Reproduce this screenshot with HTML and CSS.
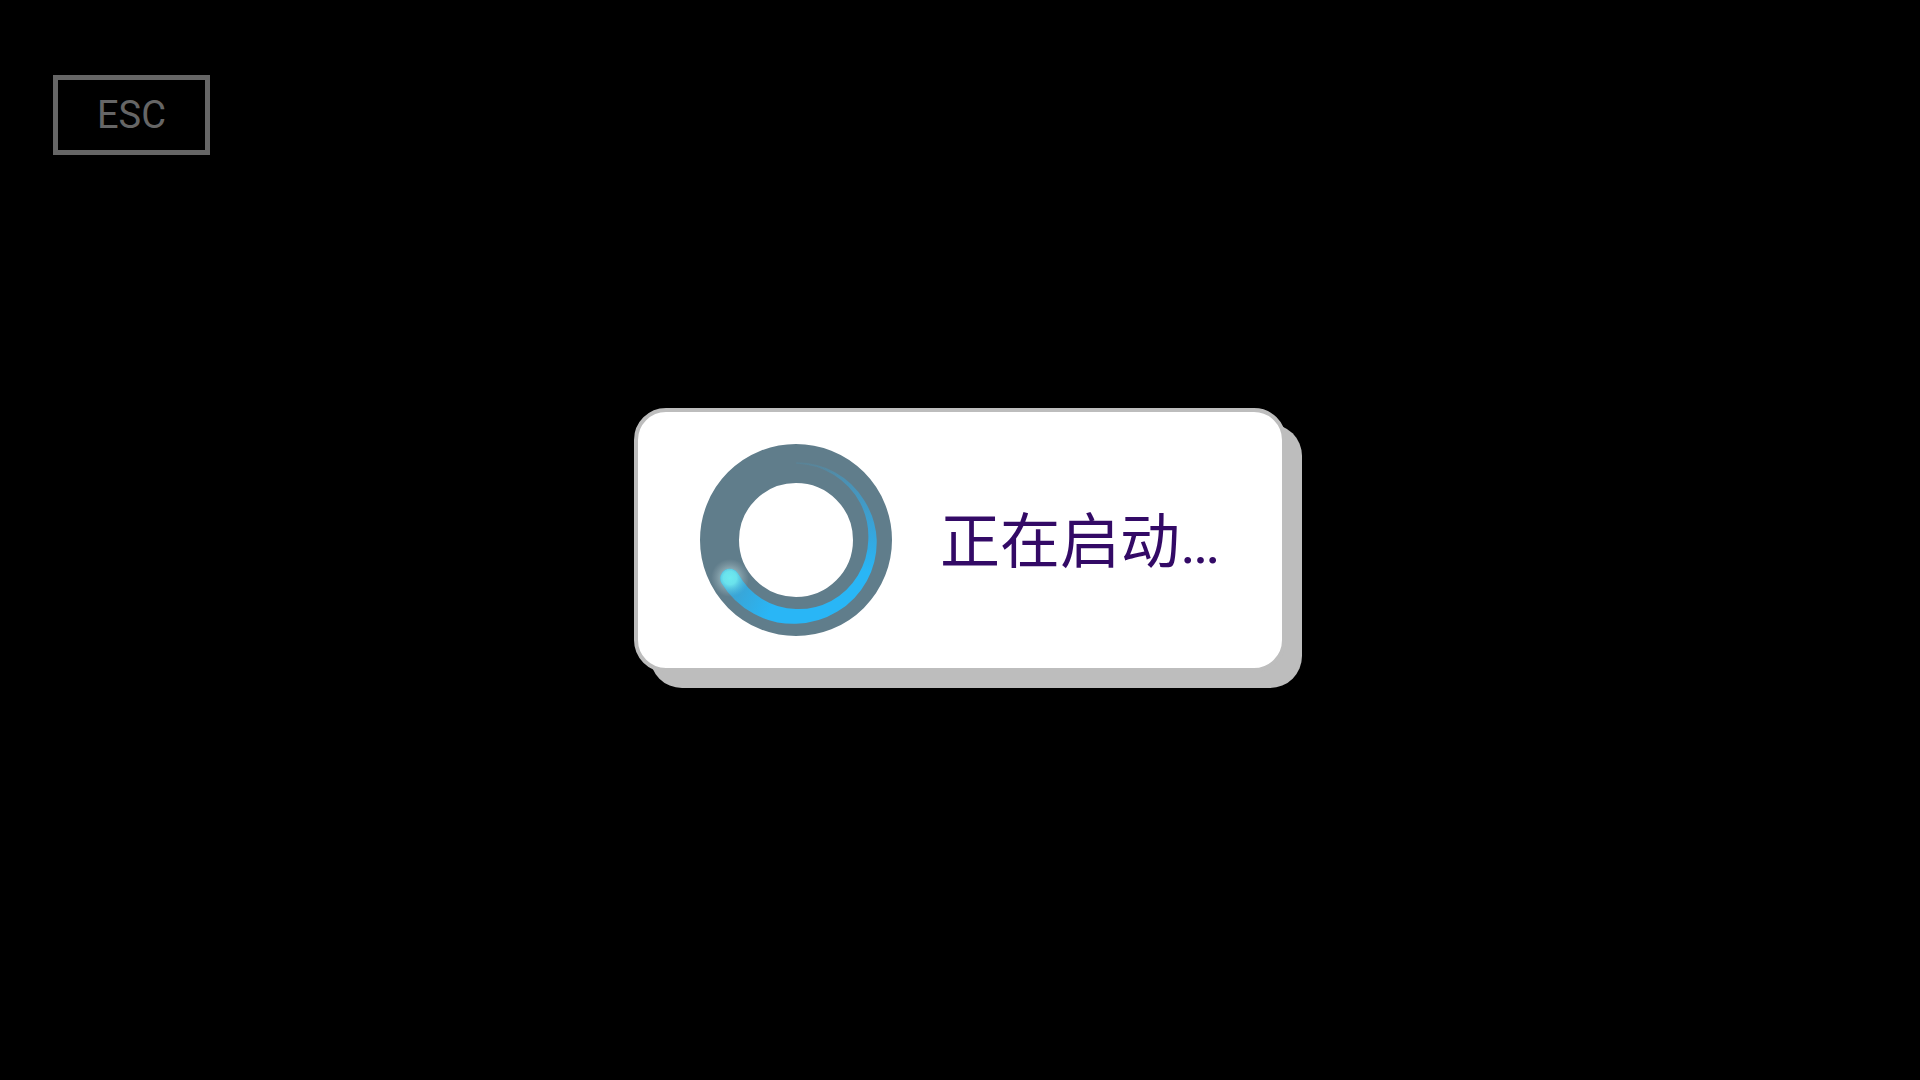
FILE: index.html
```html
<!DOCTYPE html>
<html lang="zh-CN">
<head>
<meta charset="utf-8">
<meta name="viewport" content="width=device-width, initial-scale=1">
<title>正在启动</title>
<link rel="stylesheet" href="styles.css">
</head>
<body class="screen">
<button class="esc" type="button">ESC</button>
<main class="stage">
  <div class="dialog" role="status">
    <svg class="spinner" viewBox="-96 -96 192 192" aria-hidden="true">
      <defs>
        <linearGradient id="fade" gradientUnits="userSpaceOnUse" x1="0" y1="-77" x2="0" y2="32">
          <stop offset="0" stop-color="#29b6f6" stop-opacity="0.15"/>
          <stop offset="0.2" stop-color="#33a8e2" stop-opacity="0.5"/>
          <stop offset="0.6" stop-color="#33a8e2" stop-opacity="0.9"/>
          <stop offset="1" stop-color="#29b6f6"/>
        </linearGradient>
        <linearGradient id="shade" gradientUnits="userSpaceOnUse" x1="-60" y1="40" x2="-20" y2="60">
          <stop offset="0" stop-color="#607d8b" stop-opacity="0.35"/>
          <stop offset="1" stop-color="#607d8b" stop-opacity="0"/>
        </linearGradient>
        <radialGradient id="halo">
          <stop offset="0" stop-color="#a0c4ca"/>
          <stop offset="0.45" stop-color="#9abac1" stop-opacity="0.8"/>
          <stop offset="0.75" stop-color="#90a9b2" stop-opacity="0.4"/>
          <stop offset="1" stop-color="#90a4ae" stop-opacity="0"/>
        </radialGradient>
        <radialGradient id="glow" gradientUnits="userSpaceOnUse" cx="-66" cy="38" r="19">
          <stop offset="0" stop-color="#6eeaf0"/>
          <stop offset="0.35" stop-color="#6ae2ec"/>
          <stop offset="1" stop-color="#52bfe4" stop-opacity="0"/>
        </radialGradient>
        <path id="comet" d="M0-77.5A78 78 0 0 1 38.9-67.8A78 78 0 0 1 68.3-39.5A80 80 0 0 1 80.7 0A81 81 0 0 1 70.8 40.9A82 82 0 0 1 41.4 71.6A83 83 0 0 1 0 83.8A84 84 0 0 1-42.5 73.6A85 85 0 0 1-74.5 43A9.5 9.5 0 0 1-58 33.5A67 67 0 0 0-34 58.9A68 68 0 0 0 0 69A70 70 0 0 0 35.2 60.9A71 71 0 0 0 61.7 35.7A72 72 0 0 0 72.3 0A73 73 0 0 0 64.2-37A75 75 0 0 0 37.7-65.2A76 76 0 0 0 0-76.5Z"/>
      </defs>
      <circle r="76.5" fill="none" stroke="#607d8b" stroke-width="39"/>
      <circle cx="-66" cy="38" r="19" fill="url(#halo)"/>
      <use href="#comet" fill="url(#fade)"/>
      <use href="#comet" fill="url(#shade)"/>
      <use href="#comet" fill="url(#glow)"/>
    </svg>
    <p class="message">正在启动…</p>
  </div>
</main>
</body>
</html>
```
FILE: styles.css
```css
* {
  box-sizing: border-box;
}

.screen {
  margin: 0;
  min-height: 100vh;
  display: grid;
  background: #000;
  font-family: Roboto, "Noto Sans CJK SC", sans-serif;
}

.esc {
  grid-area: 1 / 1;
  justify-self: start;
  align-self: start;
  z-index: 1;
  margin: 75px 0 0 53px;
  padding: 15px 39px;
  border: 5px solid #666;
  background: transparent;
  color: #666;
  font: 38px/40px Roboto, sans-serif;
  cursor: pointer;
}

.stage {
  grid-area: 1 / 1;
  display: grid;
  place-items: center;
}

.dialog {
  display: flex;
  align-items: center;
  gap: 48px;
  padding: 32px 62px;
  border: 4px solid #bdbdbd;
  border-radius: 32px;
  background: #fff;
  box-shadow: 16px 16px 0 #bdbdbd;
}

.spinner {
  flex: none;
  width: 192px;
  height: 192px;
}

.message {
  margin: 0;
  padding-top: 6px;
  color: #330a66;
  font-size: 60px;
  line-height: 72px;
  white-space: nowrap;
}
```
